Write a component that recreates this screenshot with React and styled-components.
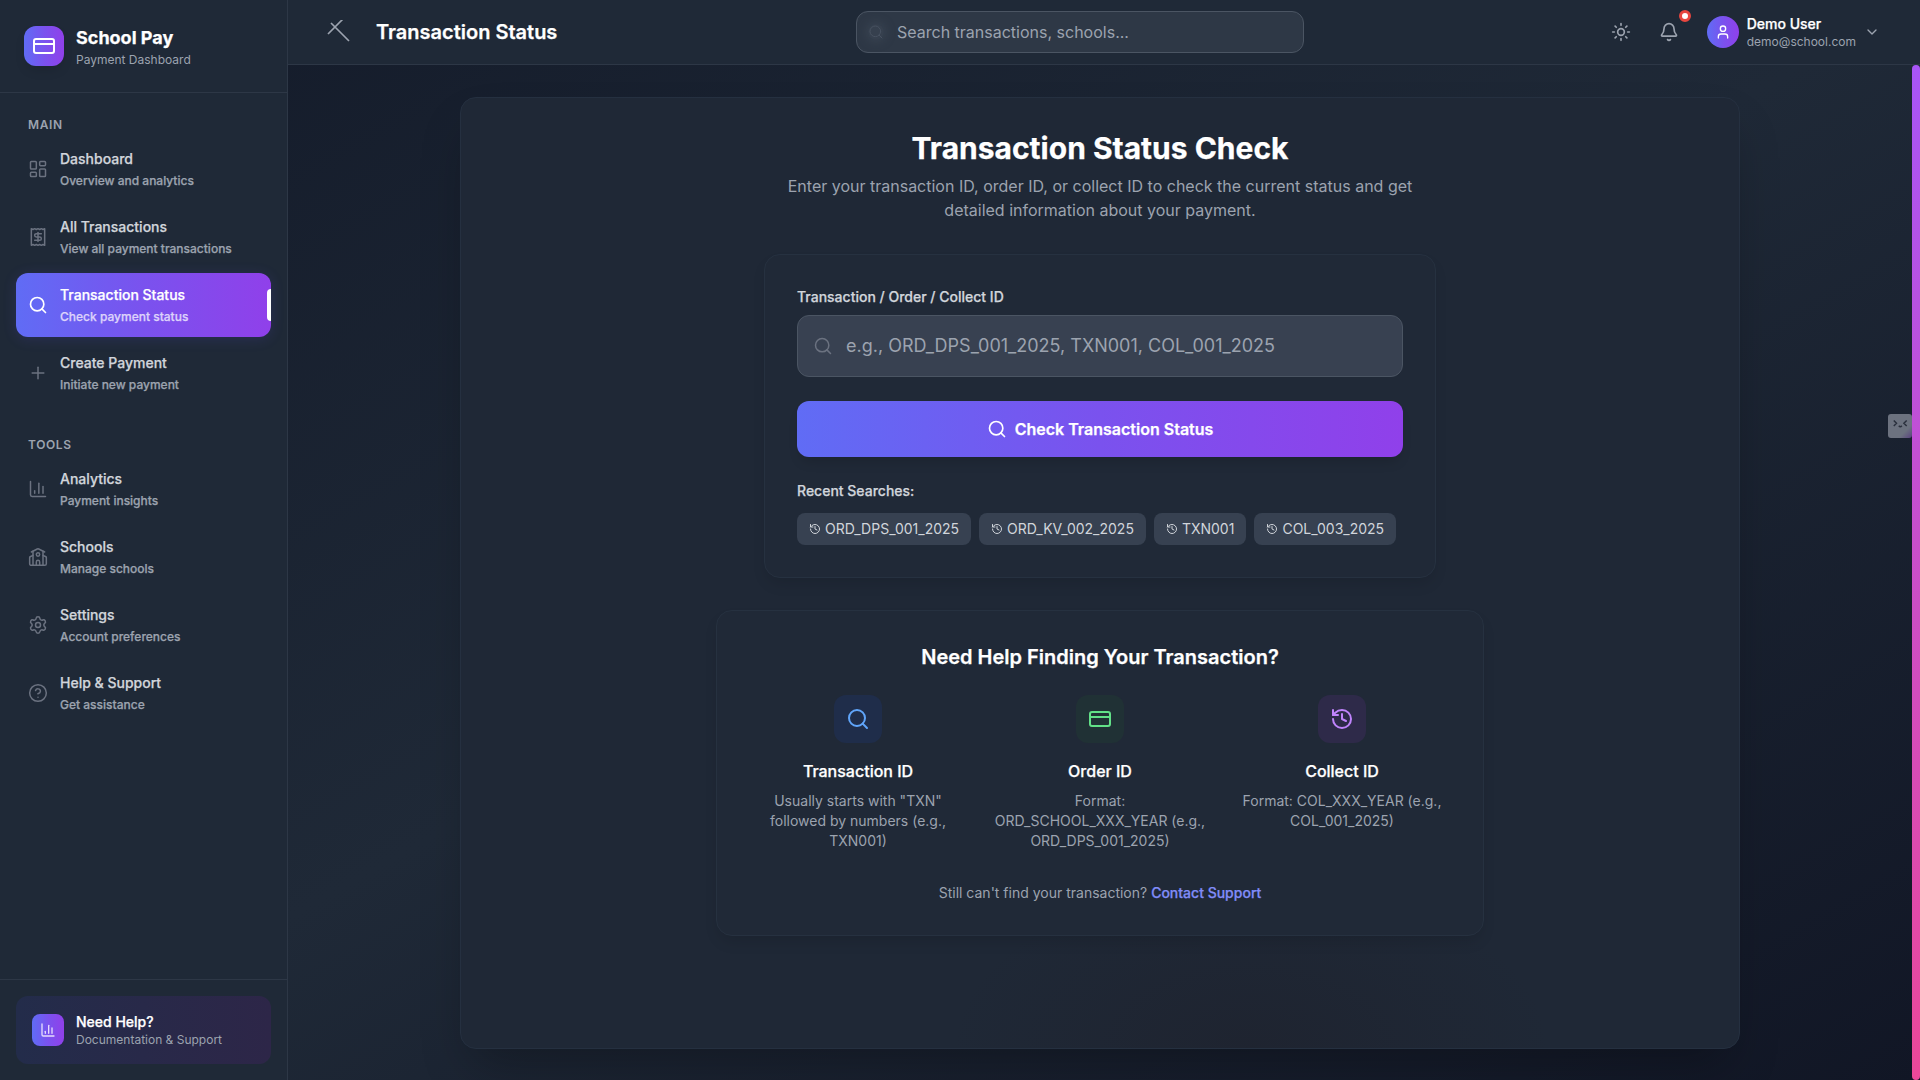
import React from "react";
import styled, { createGlobalStyle, css } from "styled-components";
import {
  LayoutDashboard, Receipt, Search, Plus, ChartColumn, School, Settings,
  CircleQuestionMark, CreditCard, Sun, Bell, User, ChevronDown, History,
} from "lucide-react";

const Global = createGlobalStyle`
  *, *::before, *::after { box-sizing: border-box; }
  body {
    margin: 0;
    font-family: Inter, "Liberation Sans", sans-serif;
    font-size: 16px;
    line-height: 24px;
    color: #fff;
    background: #111827;
    overflow: hidden;
    -webkit-font-smoothing: antialiased;
  }
  h1, h2, h3, p { margin: 0; }
  svg { display: block; flex-shrink: 0; }
`;

const brand = "linear-gradient(90deg, #606cf5 0%, #7a52ee 50%, #9040ea 100%)";

const heavy = css`
  -webkit-text-stroke: 0.25px currentColor;
`;

const Shell = styled.div`
  display: flex;
  width: 100vw;
  height: 100vh;
  background: linear-gradient(to bottom right, #131a29 0%, #1f2937 50%, #111625 100%);
`;

const Sidebar = styled.aside`
  width: 288px;
  display: flex;
  flex-direction: column;
  flex-shrink: 0;
  background: #1f2937;
  border-right: 1px solid #2d3746;
`;

const Brand = styled.div`
  display: flex;
  align-items: center;
  gap: 12px;
  padding: 24px;
  height: 93px;
  border-bottom: 1px solid #2d3746;
`;

const Tile = styled.div`
  display: flex;
  align-items: center;
  justify-content: center;
  flex-shrink: 0;
  width: ${(p) => p.$size}px;
  height: ${(p) => p.$size}px;
  border-radius: ${(p) => p.$radius}px;
  background: ${(p) => p.$bg || brand};
  color: ${(p) => p.$color || "#fff"};
  box-shadow: ${(p) => (p.$shadow ? "0 6px 12px -2px rgba(0,0,0,.12)" : "none")};
`;

const BrandName = styled.div`
  font-size: 18px;
  line-height: 28px;
  font-weight: 700;
  ${heavy}
`;

const Small = styled.div`
  font-size: 12px;
  line-height: 16px;
  color: #9ca3af;
`;

const Nav = styled.nav`
  flex: 1;
  display: flex;
  flex-direction: column;
  gap: 32px;
  padding: 24px 16px;
`;

const Group = styled.div`
  display: flex;
  flex-direction: column;
  gap: 4px;
`;

const GroupLabel = styled.div`
  padding: 0 12px;
  font-size: 12px;
  line-height: 16px;
  font-weight: 600;
  letter-spacing: 0.6px;
  color: #9ca3af;
`;

const NavItem = styled.a`
  position: relative;
  display: flex;
  align-items: center;
  gap: 12px;
  height: 64px;
  padding: 12px;
  border-radius: 12px;
  font-weight: 500;
  color: #6b7280;
  ${heavy}
  ${(p) => p.$active && css`
    color: #fff;
    background: ${brand};
    box-shadow: 0 2px 14px rgba(99, 80, 241, 0.16);
  `}
`;

const NavText = styled.div`
  display: flex;
  flex-direction: column;
  gap: 4px;
`;

const NavTitle = styled.div`
  font-size: 14px;
  line-height: 20px;
  color: ${(p) => (p.$active ? "#fff" : "#d1d5db")};
`;

const NavSub = styled.div`
  font-size: 12px;
  line-height: 16px;
  color: ${(p) => (p.$active ? "#ddd2fb" : "#9ca3af")};
`;

const Marker = styled.span`
  position: absolute;
  right: 0;
  top: 16px;
  width: 4px;
  height: 32px;
  border-radius: 4px 0 0 4px;
  background: #fff;
`;

const SideFoot = styled.div`
  padding: 16px;
  border-top: 1px solid #2d3746;
`;

const HelpBox = styled.div`
  display: flex;
  align-items: center;
  gap: 12px;
  padding: 16px;
  border-radius: 12px;
  background: linear-gradient(90deg, #232c4a, #2d2648);
`;

const Strong = styled.div`
  font-size: 14px;
  line-height: 20px;
  font-weight: 500;
  color: #fff;
  ${heavy}
`;

const Column = styled.div`
  flex: 1;
  min-width: 0;
  display: flex;
  flex-direction: column;
`;

const Header = styled.header`
  display: grid;
  grid-template-columns: 568px 448px 1fr;
  align-items: center;
  height: 65px;
  flex-shrink: 0;
  background: #1f2937;
  border-bottom: 1px solid #2d3746;
`;

const HeaderLeft = styled.div`
  display: flex;
  align-items: center;
  gap: 26px;
  padding-left: 38px;
`;

const PageTitle = styled.h1`
  font-size: 20px;
  line-height: 28px;
  font-weight: 600;
  ${heavy}
`;

const SearchBox = styled.div`
  display: flex;
  align-items: center;
  gap: 13px;
  height: 42px;
  padding-left: 11px;
  border: 1px solid #4b5563;
  border-radius: 12px;
  background: #2e3846;
  color: #9ca3af;
`;

const FaintIcon = styled.span`
  display: flex;
  color: #475160;
  border-radius: 50%;
  background: rgba(70, 80, 94, 0.35);
  box-shadow: 0 0 8px 3px rgba(70, 80, 94, 0.35);
`;

const HeaderRight = styled.div`
  display: flex;
  align-items: center;
  justify-content: flex-end;
  padding-right: 40px;
  color: #9ca3af;
`;

const IconButton = styled.div`
  position: relative;
  display: flex;
  padding: 10px;
  margin-right: 8px;
`;

const Badge = styled.span`
  position: absolute;
  top: -2px;
  right: -2px;
  width: 12px;
  height: 12px;
  border: 3px solid #e8463f;
  border-radius: 50%;
  background: #fff;
`;

const Account = styled.div`
  display: flex;
  align-items: center;
  gap: 8px;
  padding-left: 10px;
`;

const Body = styled.div`
  flex: 1;
  min-height: 0;
  display: flex;
`;

const Main = styled.main`
  flex: 1;
  padding: 32px 172px 31px;
  display: flex;
`;

const ScrollThumb = styled.div`
  width: 8px;
  border-radius: 4px;
  background: linear-gradient(180deg, #a855f7, #ec4899);
`;

const Panel = styled.section`
  flex: 1;
  display: flex;
  flex-direction: column;
  align-items: center;
  padding: 32px;
  border: 1px solid #253040;
  border-radius: 16px;
  background:
    radial-gradient(ellipse 300px 170px at 790px 100%, rgba(30, 33, 44, 0.6), transparent),
    #1f2836;
  box-shadow:
    0 25px 50px -12px rgba(0, 0, 0, 0.28),
    200px 40px 40px -40px rgba(0, 0, 0, 0);
`;

const Heading = styled.h2`
  font-size: 30px;
  line-height: 36px;
  font-weight: 700;
  ${heavy}
`;

const Lead = styled.p`
  width: 672px;
  margin-top: 8px;
  text-align: center;
  color: #9ca3af;
`;

const Card = styled.section`
  display: flex;
  flex-direction: column;
  align-items: ${(p) => (p.$center ? "center" : "stretch")};
  width: ${(p) => p.$width}px;
  margin-top: 32px;
  padding: 32px;
  border: 1px solid #263140;
  border-radius: 16px;
  background: #202937;
  box-shadow: 0 8px 15px -3px rgba(0, 0, 0, 0.12);
`;

const Label = styled.div`
  font-size: 14px;
  line-height: 20px;
  font-weight: 500;
  color: #d1d5db;
  ${heavy}
`;

const IdField = styled.div`
  display: flex;
  align-items: center;
  gap: 13px;
  height: 62px;
  margin: 8px 0 24px;
  padding: 0 15px;
  border: 1px solid #4b5563;
  border-radius: 12px;
  background: #384151;
  color: #6b7280;
`;

const Placeholder = styled.span`
  font-size: ${(p) => p.$size}px;
  color: #9ca3af;
`;

const Submit = styled.div`
  display: flex;
  align-items: center;
  justify-content: center;
  gap: 8px;
  height: 56px;
  margin-bottom: 24px;
  border-radius: 12px;
  background: ${brand};
  font-weight: 600;
  box-shadow: 0 8px 12px -3px rgba(0, 0, 0, 0.13);
  ${heavy}
`;

const Chips = styled.div`
  display: flex;
  gap: 8px;
  margin-top: 12px;
`;

const Chip = styled.div`
  display: flex;
  align-items: center;
  gap: 4px;
  height: 32px;
  padding: 0 12px;
  border-radius: 8px;
  background: #374151;
  font-size: 14px;
  color: #d1d5db;
`;

const CardTitle = styled.h3`
  font-size: 20px;
  line-height: 28px;
  font-weight: 600;
  ${heavy}
`;

const Columns = styled.div`
  display: grid;
  grid-template-columns: repeat(3, 1fr);
  gap: 24px;
  width: 100%;
  margin: 24px 0 32px;
`;

const Tip = styled.div`
  display: flex;
  flex-direction: column;
  align-items: center;
  text-align: center;
`;

const TipTitle = styled.div`
  margin: 16px 0 8px;
  font-weight: 500;
  ${heavy}
`;

const Note = styled.p`
  font-size: 14px;
  line-height: 20px;
  color: #9ca3af;
`;

const Link = styled.a`
  font-weight: 500;
  color: #818cf8;
  ${heavy}
`;

const Companion = styled.div`
  position: fixed;
  right: 8px;
  top: 414px;
  width: 24px;
  height: 24px;
  border-radius: 3px;
  background: linear-gradient(135deg, #6c727f 72%, #59427f 100%);
`;

const groups = [
  { label: "MAIN", items: [
    [LayoutDashboard, "Dashboard", "Overview and analytics"],
    [Receipt, "All Transactions", "View all payment transactions"],
    [Search, "Transaction Status", "Check payment status", true],
    [Plus, "Create Payment", "Initiate new payment"],
  ] },
  { label: "TOOLS", items: [
    [ChartColumn, "Analytics", "Payment insights"],
    [School, "Schools", "Manage schools"],
    [Settings, "Settings", "Account preferences"],
    [CircleQuestionMark, "Help & Support", "Get assistance"],
  ] },
];

const recent = ["ORD_DPS_001_2025", "ORD_KV_002_2025", "TXN001", "COL_003_2025"];

const tips = [
  [Search, "Transaction ID", 'Usually starts with "TXN" followed by numbers (e.g., TXN001)', "#1f2d4a", "#60a5fa"],
  [CreditCard, "Order ID", "Format: ORD_SCHOOL_XXX_YEAR (e.g., ORD_DPS_001_2025)", "#203135", "#62e088"],
  [History, "Collect ID", "Format: COL_XXX_YEAR (e.g., COL_001_2025)", "#2e2a49", "#c084fc"],
];

const ReceiptIcon = () => (
  <svg width="20" height="20" viewBox="0 0 24 24" fill="none" stroke="currentColor" strokeWidth="1.8" strokeLinecap="round" strokeLinejoin="round">
    <path d="M4 2v20l2-1 2 1 2-1 2 1 2-1 2 1 2-1 2 1V2l-2 1-2-1-2 1-2-1-2 1-2-1-2 1Z" />
    <path d="M16 8h-6a2 2 0 1 0 0 4h4a2 2 0 1 1 0 4H8" />
    <path d="M12 17.500v-11" />
  </svg>
);

const SchoolIcon = () => (
  <svg width="20" height="20" viewBox="0 0 24 24" fill="none" stroke="currentColor" strokeWidth="1.8" strokeLinecap="round" strokeLinejoin="round">
    <path d="M14 22v-4a2 2 0 1 0-4 0v4" />
    <path d="m18 10 3.447 1.724a1 1 0 0 1 .553.894V20a2 2 0 0 1-2 2H4a2 2 0 0 1-2-2v-7.382a1 1 0 0 1 .553-.894L6 10" />
    <path d="M18 5v17M6 5v17" />
    <path d="m4 6 7.106-3.553a2 2 0 0 1 1.788 0L20 6" />
    <circle cx="12" cy="9" r="2" />
  </svg>
);

const custom = new Map([[Receipt, ReceiptIcon], [School, SchoolIcon]]);

export default function App() {
  return (
    <Shell>
      <Global />
      <Sidebar>
        <Brand>
          <Tile $size={40} $radius={12} $shadow><CreditCard size={24} /></Tile>
          <div>
            <BrandName>School Pay</BrandName>
            <Small>Payment Dashboard</Small>
          </div>
        </Brand>
        <Nav>
          {groups.map((g) => (
            <Group key={g.label}>
              <GroupLabel>{g.label}</GroupLabel>
              {g.items.map(([Base, title, sub, active]) => {
                const Icon = custom.get(Base) || Base;
                return (
                  <NavItem key={title} $active={active}>
                    <Icon size={20} strokeWidth={active ? 2 : 1.8} />
                    <NavText>
                      <NavTitle $active={active}>{title}</NavTitle>
                      <NavSub $active={active}>{sub}</NavSub>
                    </NavText>
                    {active && <Marker />}
                  </NavItem>
                );
              })}
            </Group>
          ))}
        </Nav>
        <SideFoot>
          <HelpBox>
            <Tile $size={32} $radius={8} $color="#e6dcfd"><ChartColumn size={16} /></Tile>
            <div>
              <Strong>Need Help?</Strong>
              <Small>Documentation &amp; Support</Small>
            </div>
          </HelpBox>
        </SideFoot>
      </Sidebar>
      <Column>
        <Header>
          <HeaderLeft>
            <svg width="24" height="24" viewBox="0 0 24 24" fill="none" stroke="#9ca3af" strokeWidth="1.7">
              <path d="M2 14 16.500 -.5M5 3 23 21" />
            </svg>
            <PageTitle>Transaction Status</PageTitle>
          </HeaderLeft>
          <SearchBox>
            <FaintIcon><Search size={16} strokeWidth={1.5} /></FaintIcon>
            <Placeholder $size={16}>Search transactions, schools...</Placeholder>
          </SearchBox>
          <HeaderRight>
            <IconButton><Sun size={20} strokeWidth={2} /></IconButton>
            <IconButton><Bell size={20} strokeWidth={2} /><Badge /></IconButton>
            <Account>
              <Tile $size={32} $radius={16}><User size={16} /></Tile>
              <div>
                <Strong>Demo User</Strong>
                <Small>demo@school.com</Small>
              </div>
              <ChevronDown size={16} />
            </Account>
          </HeaderRight>
        </Header>
        <Body>
          <Main>
            <Panel>
              <Heading>Transaction Status Check</Heading>
              <Lead>
                Enter your transaction ID, order ID, or collect ID to check the current status and get
                detailed information about your payment.
              </Lead>
              <Card $width={672}>
                <Label>Transaction / Order / Collect ID</Label>
                <IdField>
                  <Search size={20} strokeWidth={1.8} />
                  <Placeholder $size={18}>e.g., ORD_DPS_001_2025, TXN001, COL_001_2025</Placeholder>
                </IdField>
                <Submit><Search size={20} />Check Transaction Status</Submit>
                <Label>Recent Searches:</Label>
                <Chips>
                  {recent.map((r) => (
                    <Chip key={r}><History size={12} />{r}</Chip>
                  ))}
                </Chips>
              </Card>
              <Card $width={768} $center>
                <CardTitle>Need Help Finding Your Transaction?</CardTitle>
                <Columns>
                  {tips.map(([Icon, title, text, bg, color]) => (
                    <Tip key={title}>
                      <Tile $size={48} $radius={12} $bg={bg} $color={color}><Icon size={24} /></Tile>
                      <TipTitle>{title}</TipTitle>
                      <Note>{text}</Note>
                    </Tip>
                  ))}
                </Columns>
                <Note>Still can't find your transaction? <Link>Contact Support</Link></Note>
              </Card>
            </Panel>
          </Main>
          <ScrollThumb />
        </Body>
      </Column>
      <Companion>
        <svg width="24" height="24" viewBox="0 0 24 24" fill="none" stroke="#2a303d" strokeWidth="1.5">
          <path d="M5.800 6.500 8.500 9.300 5.800 12M18.700 6.500 15.900 9.300l2.800 2.700M10.800 11.800q1.500 1.800 3 0" />
        </svg>
      </Companion>
    </Shell>
  );
}
